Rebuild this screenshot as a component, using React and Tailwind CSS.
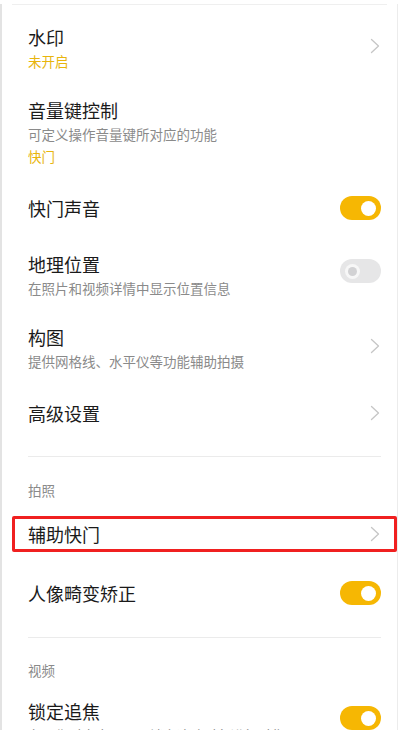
const font = { fontFamily: '"Noto Sans CJK SC", "Noto Sans", sans-serif' };

function Toggle({ on }) {
  if (on) {
    return (
      <div className="flex h-[24px] w-[41px] items-center justify-end rounded-full bg-[#f6b703] pr-[5px]">
        <div className="h-[15px] w-[15px] rounded-full bg-white" />
      </div>
    );
  }
  return (
    <div className="flex h-[24px] w-[41px] items-center rounded-full bg-[#e6e6e7] pl-[5px]">
      <div className="flex h-[15px] w-[15px] items-center justify-center rounded-full bg-[#f7f7f7]">
        <div className="h-[9px] w-[9px] rounded-full bg-[#d2d2d4]" />
      </div>
    </div>
  );
}

function Chevron() {
  return (
    <svg width="10" height="16" viewBox="0 0 10 16" fill="none" className="mr-[1px]">
      <polyline points="1.5,1.5 8.5,8 1.5,14.5" stroke="#c6c6c6" strokeWidth="1.3" strokeLinecap="round" strokeLinejoin="round" />
    </svg>
  );
}

function Row({ title, sub, note, right, className = '' }) {
  return (
    <div className={`flex items-center justify-between pl-[26px] pr-[16px] ${className}`}>
      <div className="flex flex-col">
        <div className="text-[18px] leading-[26px] text-[#1a1a1a]">{title}</div>
        {sub && <div className="text-[13.5px] leading-[22px] text-[#8a8a8a]">{sub}</div>}
        {note && <div className="text-[13.5px] leading-[22px] text-[#e8b50c]">{note}</div>}
      </div>
      <div className="flex items-center">{right}</div>
    </div>
  );
}

export default function App() {
  return (
    <div style={font} className="h-[730px] w-[399px] overflow-hidden bg-white">
      <div className="h-full w-[398px] border-l-2 border-r border-[#e3e3e3] border-r-[#ececec]">
        <div className="mx-[10px] mt-[4px] h-px bg-[#efefef]" />
        <div className="flex flex-col">
          <Row className="mt-[19px]" title="水印" note="未开启" right={<div className="mt-[-4px]"><Chevron /></div>} />
          <Row className="mt-[25px]" title="音量键控制" sub="可定义操作音量键所对应的功能" note="快门" right={null} />
          <Row className="mt-[28px]" title="快门声音" right={<Toggle on />} />
          <Row className="mt-[30px]" title="地理位置" sub="在照片和视频详情中显示位置信息" right={<div className="mt-[-8px]"><Toggle /></div>} />
          <Row className="mt-[25px]" title="构图" sub="提供网格线、水平仪等功能辅助拍摄" right={<div className="mt-[-4px]"><Chevron /></div>} />
          <Row className="mt-[28px]" title="高级设置" right={<Chevron />} />
          <div className="ml-[26px] mr-[16px] mt-[30px] h-px bg-[#ebebeb]" />
          <div className="mt-[22px] pl-[26px] text-[13.5px] leading-[22px] text-[#8a8a8a]">拍照</div>
          <div className="ml-[10px] mt-[15px] rounded-[2px] border-[3px] border-[#f02020] py-[2px]">
            <Row className="!pl-[13px] !pr-[13px]" title="辅助快门" right={<Chevron />} />
          </div>
          <Row className="mt-[28px]" title="人像畸变矫正" right={<Toggle on />} />
          <div className="ml-[26px] mr-[16px] mt-[31px] h-px bg-[#ebebeb]" />
          <div className="mt-[21px] pl-[26px] text-[13.5px] leading-[22px] text-[#8a8a8a]">视频</div>
          <Row className="mt-[17px]" title="锁定追焦" sub="在录像时点击画面可锁定追踪对象进行对焦" right={<div className="mt-[-8px]"><Toggle on /></div>} />
        </div>
      </div>
    </div>
  );
}
